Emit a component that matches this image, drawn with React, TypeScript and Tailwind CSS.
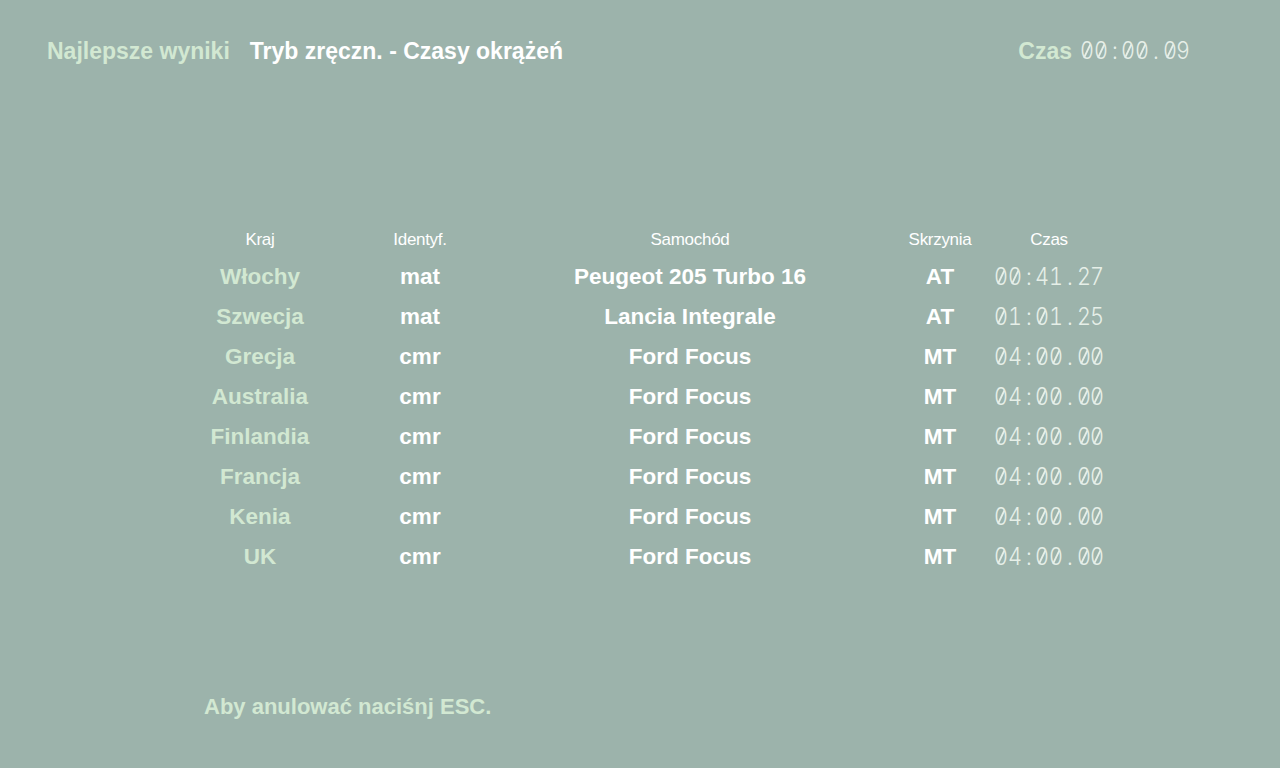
import React from 'react'

type Row = {
  country: string
  id: string
  car: string
  gear: string
  time: string
}

const rows: Row[] = [
  { country: 'Włochy', id: 'mat', car: 'Peugeot 205 Turbo 16', gear: 'AT', time: '00:41.27' },
  { country: 'Szwecja', id: 'mat', car: 'Lancia Integrale', gear: 'AT', time: '01:01.25' },
  { country: 'Grecja', id: 'cmr', car: 'Ford Focus', gear: 'MT', time: '04:00.00' },
  { country: 'Australia', id: 'cmr', car: 'Ford Focus', gear: 'MT', time: '04:00.00' },
  { country: 'Finlandia', id: 'cmr', car: 'Ford Focus', gear: 'MT', time: '04:00.00' },
  { country: 'Francja', id: 'cmr', car: 'Ford Focus', gear: 'MT', time: '04:00.00' },
  { country: 'Kenia', id: 'cmr', car: 'Ford Focus', gear: 'MT', time: '04:00.00' },
  { country: 'UK', id: 'cmr', car: 'Ford Focus', gear: 'MT', time: '04:00.00' },
]

// dot-matrix style digits, each char in a fixed cell, zeros slashed
function LcdTime({ value }: { value: string }) {
  return (
    <span className="flex font-['Inter',sans-serif] font-light text-[24px] leading-none text-[#e6efe8] [font-feature-settings:'tnum'_1]">
      {value.split('').map((ch, i) => (
        <span key={i} className="relative w-[13.75px] flex justify-center scale-x-90">
          {ch}
          {ch === '0' && (
            <span className="absolute left-1/2 top-1/2 w-[1.5px] h-[15px] -translate-x-1/2 -translate-y-1/2 rotate-[28deg] bg-[#e6efe8]" />
          )}
        </span>
      ))}
    </span>
  )
}

const cell = 'flex justify-center items-center whitespace-nowrap'

export default function App() {
  return (
    <div className="w-[1280px] h-[768px] bg-[#9cb3ab] flex flex-col font-['Liberation_Sans',Arial,sans-serif] overflow-hidden">
      <header className="flex items-center h-[28px] mt-[37px] pl-[47px] pr-[90px] text-[23px] font-bold">
        <span className="text-[#d2e8d2]">Najlepsze wyniki</span>
        <span className="ml-[20px] text-white">Tryb zręczn. - Czasy okrążeń</span>
        <div className="ml-auto flex items-center gap-[8px]">
          <span className="text-[#d2e8d2]">Czas</span>
          <LcdTime value="00:00.09" />
        </div>
      </header>

      <div className="mt-[158px] pl-[180px]">
        <div className="grid grid-cols-[160px_160px_380px_120px_98px] h-[34px] items-center text-[17px] text-white tracking-[-0.3px]">
          <div className={cell}>Kraj</div>
          <div className={cell}>Identyf.</div>
          <div className={cell}>Samochód</div>
          <div className={cell}>Skrzynia</div>
          <div className={cell}>Czas</div>
        </div>
        {rows.map((r, i) => (
          <div
            key={i}
            className="grid grid-cols-[160px_160px_380px_120px_98px] h-[40px] items-center text-[22.5px] font-bold"
          >
            <div className={cell + ' text-[#d2e8d2]'}>{r.country}</div>
            <div className={cell + ' text-white'}>{r.id}</div>
            <div className={cell + ' text-white'}>{r.car}</div>
            <div className={cell + ' text-white'}>{r.gear}</div>
            <div className={cell}>
              <LcdTime value={r.time} />
            </div>
          </div>
        ))}
      </div>

      <footer className="mt-[115px] h-[28px] flex items-center pl-[204px] text-[22px] font-bold text-[#d2e8d2]">
        Aby anulować naciśnj ESC.
      </footer>
    </div>
  )
}
